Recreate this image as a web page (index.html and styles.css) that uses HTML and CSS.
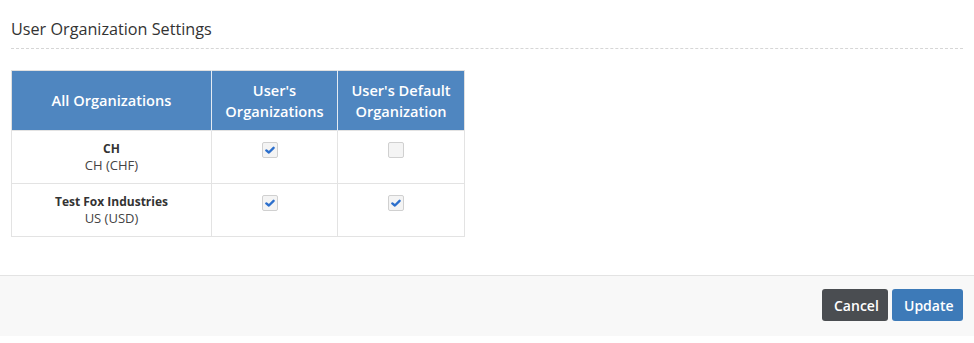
FILE: index.html
```html
<!DOCTYPE html>
<html>
<head>
<meta charset="utf-8">
<link rel="stylesheet" href="styles.css">
</head>
<body>
<div class="page">
  <div class="content">
    <h2 class="title">User Organization Settings</h2>
    <table class="orgs">
      <thead>
        <tr>
          <th class="c1">All Organizations</th>
          <th class="c2">User's<br>Organizations</th>
          <th class="c3">User's Default<br>Organization</th>
        </tr>
      </thead>
      <tbody>
        <tr>
          <td><div class="name">CH</div><div class="sub">CH (CHF)</div></td>
          <td><span class="cb checked"><svg viewBox="0 0 16 16" width="16" height="16"><path d="M4.3 8.4 L6.9 10.5 L11.6 5.8" /></svg></span></td>
          <td><span class="cb"></span></td>
        </tr>
        <tr>
          <td><div class="name">Test Fox Industries</div><div class="sub">US (USD)</div></td>
          <td><span class="cb checked"><svg viewBox="0 0 16 16" width="16" height="16"><path d="M4.3 8.4 L6.9 10.5 L11.6 5.8" /></svg></span></td>
          <td><span class="cb checked"><svg viewBox="0 0 16 16" width="16" height="16"><path d="M4.3 8.4 L6.9 10.5 L11.6 5.8" /></svg></span></td>
        </tr>
      </tbody>
    </table>
  </div>
  <div class="footer">
    <button class="btn btn-cancel">Cancel</button>
    <button class="btn btn-update">Update</button>
  </div>
</div>
</body>
</html>
```
FILE: styles.css
```css
html, body {
  margin: 0;
  padding: 0;
  background: #fff;
}
body {
  font-family: "Open Sans", "Liberation Sans", sans-serif;
  color: #333;
}
.page {
  width: 974px;
}
.content {
  padding: 18px 11px 0 11px;
  height: 257px;
}
.title {
  margin: 0;
  font-size: 16.2px;
  font-weight: 400;
  color: #333;
  line-height: 22px;
  padding-bottom: 8px;
  border-bottom: 1px dashed #d6d6d6;
}
.orgs {
  margin-top: 21px;
  border-collapse: collapse;
  border: 1px solid #e0e0e0;
}
.orgs th {
  background: #4f86c0;
  color: #fff;
  font-size: 14.6px;
  font-weight: 600;
  line-height: 21px;
  height: 59px;
  padding: 0 4px;
  border-right: 1px solid #e4ebf3;
  text-align: center;
}
.orgs th:last-child { border-right: none; }
.orgs .c1 { width: 191px; }
.orgs .c2 { width: 117px; }
.orgs .c3 { width: 118px; }
.orgs td {
  border: 1px solid #e3e3e3;
  text-align: center;
  vertical-align: top;
  padding: 9px 4px 0;
  height: 43px;
  font-size: 12px;
  line-height: 17px;
}
.name {
  font-weight: 700;
  color: #333;
}
.sub {
  color: #444;
  font-size: 13px;
}
.cb {
  display: inline-block;
  width: 14px;
  height: 14px;
  margin-top: 2px;
  margin-right: 10px;
  border: 1px solid #d0d0d0;
  border-radius: 2px;
  background: #f4f4f4;
  position: relative;
}
.cb svg {
  position: absolute;
  left: -1px;
  top: -1px;
}
.cb path {
  fill: none;
  stroke: #2c6fcc;
  stroke-width: 2.4;
  stroke-linecap: round;
  stroke-linejoin: round;
}
.footer {
  border-top: 1px solid #e3e3e3;
  background: #f8f8f8;
  height: 60px;
  display: flex;
  justify-content: flex-end;
  align-items: center;
  gap: 4px;
  padding-right: 11px;
}
.btn {
  font-family: "Open Sans", "Liberation Sans", sans-serif;
  font-size: 14px;
  font-weight: 600;
  color: #fff;
  border: none;
  border-radius: 3px;
  height: 32px;
  padding: 0 12px;
  margin-top: -2px;
  cursor: pointer;
}
.btn-cancel {
  background: #4a4d51;
  width: 66px;
}
.btn-update {
  background: #3d7ab8;
  width: 71px;
}
```
